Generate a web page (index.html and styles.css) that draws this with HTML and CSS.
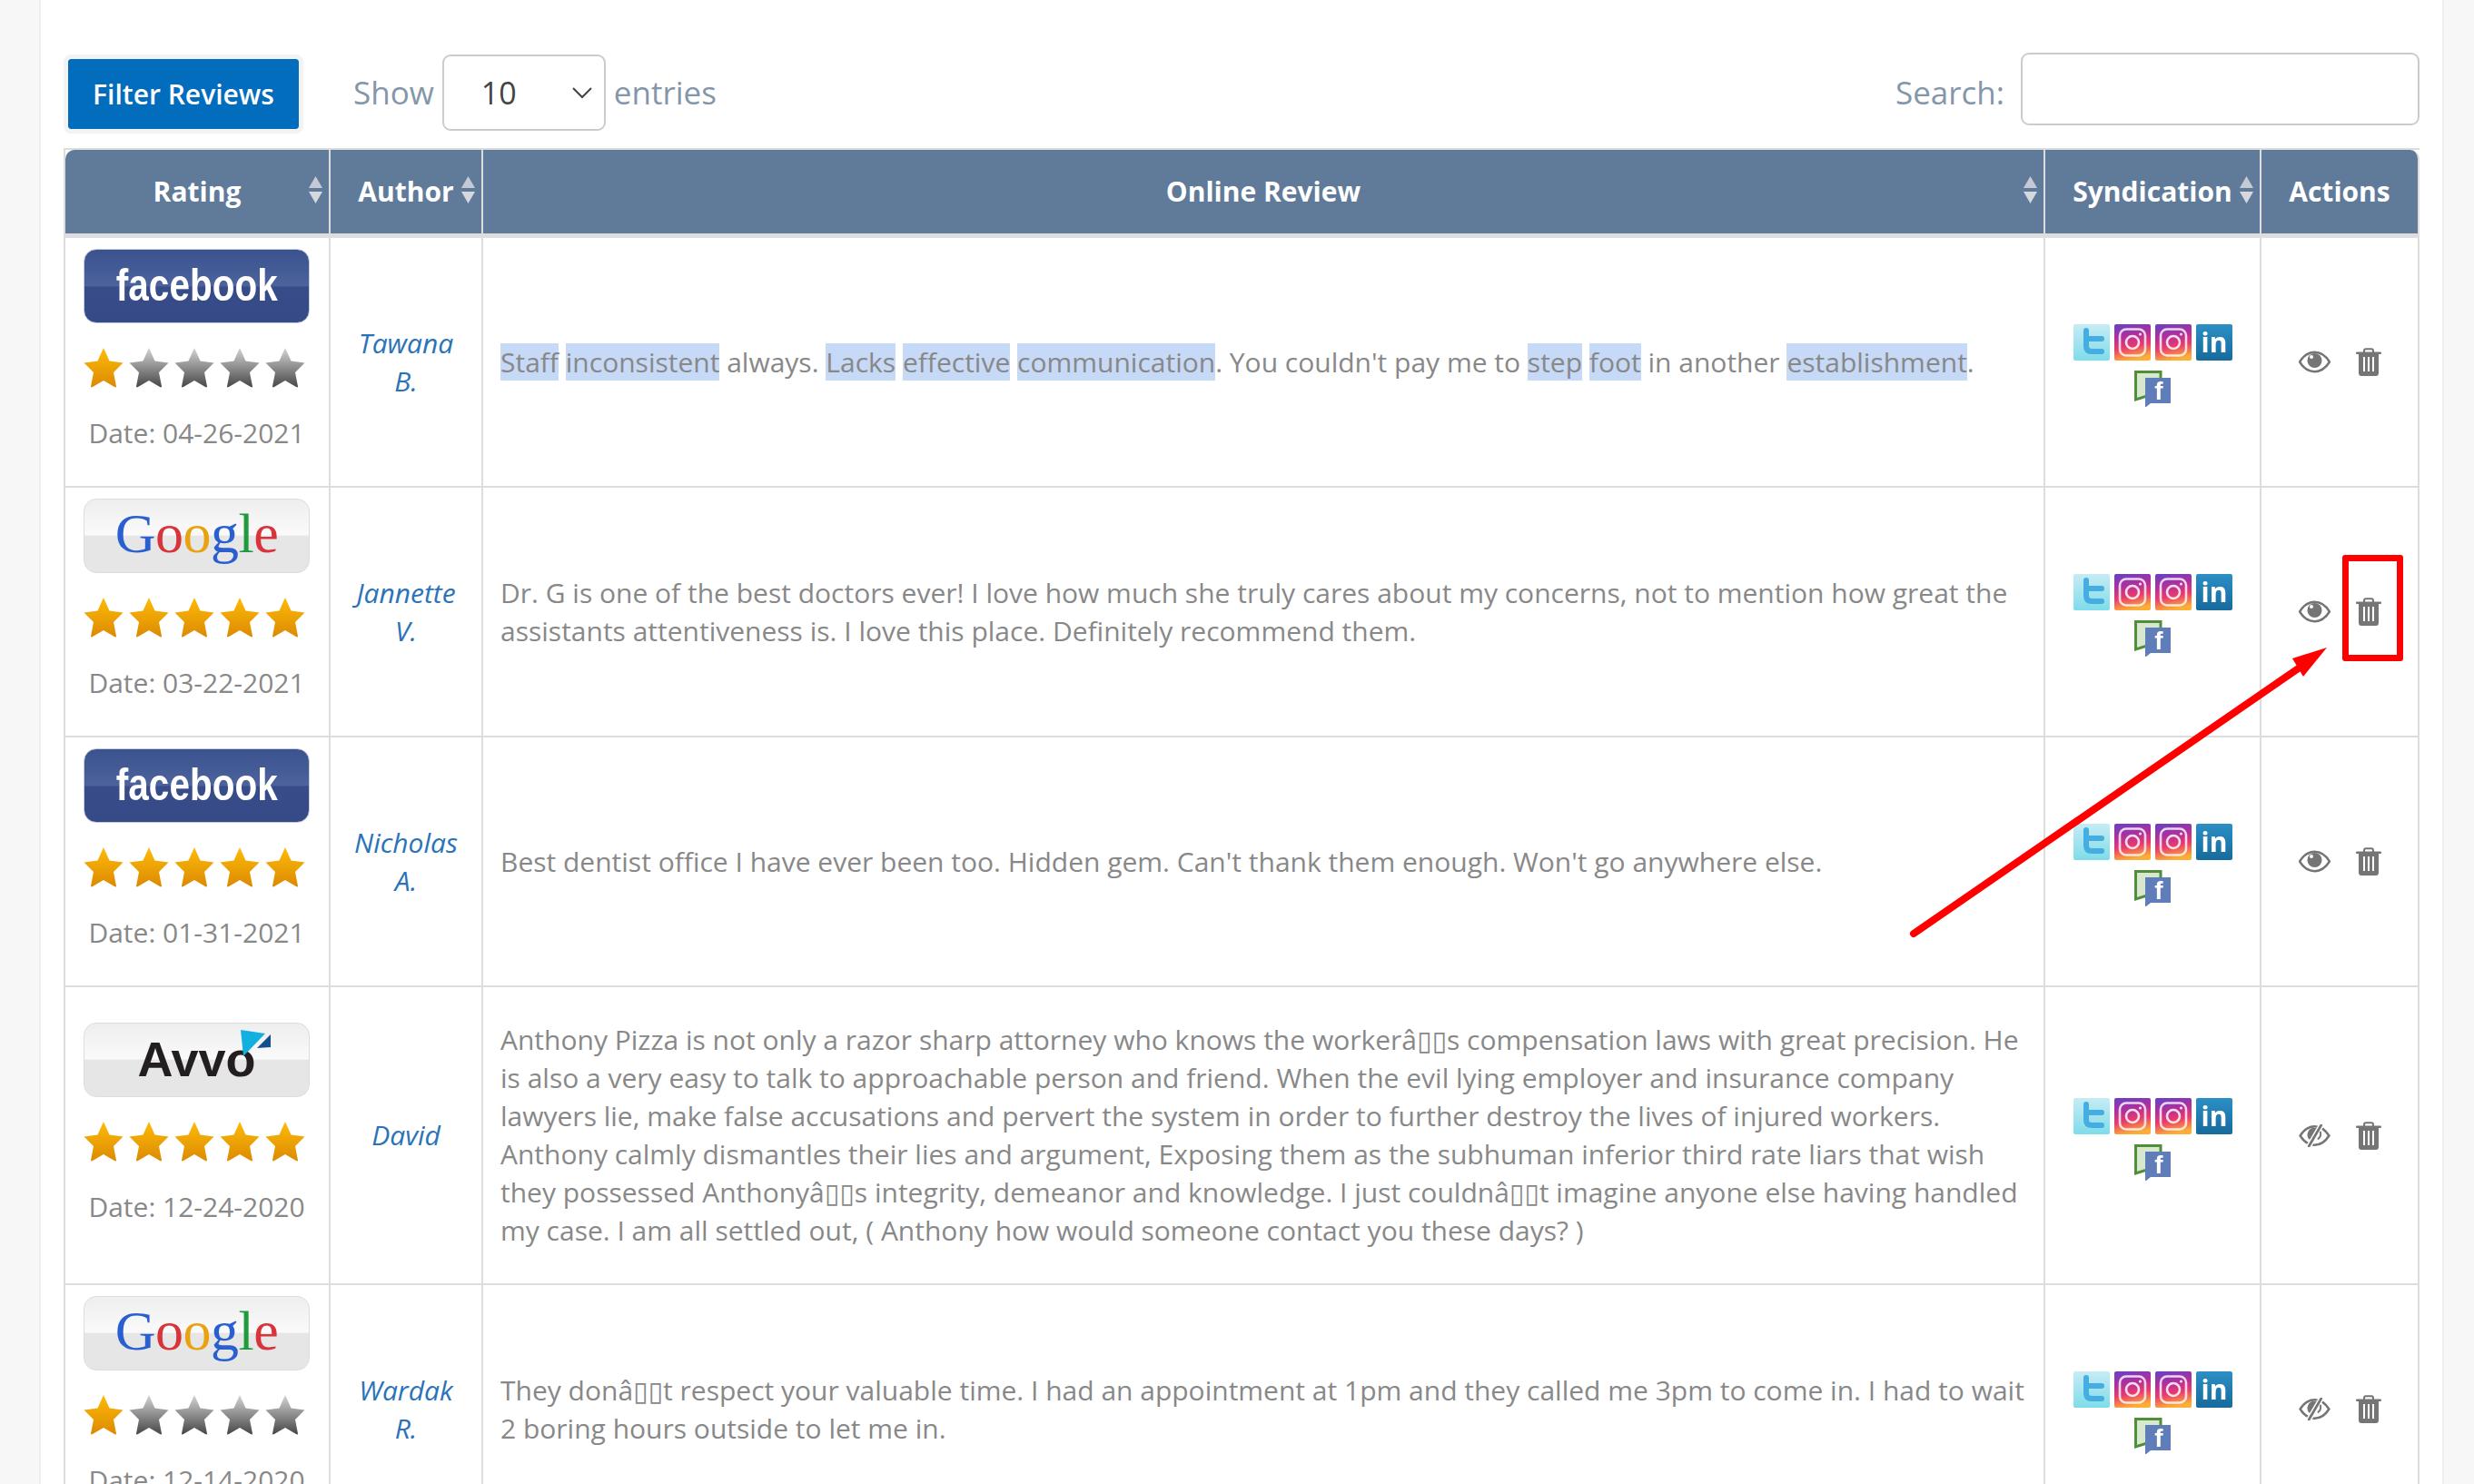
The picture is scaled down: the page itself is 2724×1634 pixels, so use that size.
FILE: index.html
```html
<!DOCTYPE html>
<html lang="en">

<head>
    <meta charset="utf-8">
    <meta name="viewport" content="width=device-width, initial-scale=1.0">
    <title>Online Reviews</title>
    <link rel="stylesheet" href="styles.css">
</head>

<body>

    <!-- shared icons -->
    <svg class="defs" width="0" height="0">
        <defs>
            <linearGradient id="gold" x1="0" y1="0" x2="0" y2="1">
                <stop offset="0" stop-color="#fdbb08" />
                <stop offset="1" stop-color="#dc8a02" />
            </linearGradient>
            <linearGradient id="grey" x1="0" y1="0" x2="0" y2="1">
                <stop offset="0" stop-color="#d4d4d4" />
                <stop offset="1" stop-color="#474747" />
            </linearGradient>
            <linearGradient id="tw" x1="0" y1="0" x2="0" y2="1">
                <stop offset="0" stop-color="#c6ecf5" />
                <stop offset="1" stop-color="#7edcea" />
            </linearGradient>
            <linearGradient id="ig" x1="0.15" y1="0" x2="0.35" y2="1">
                <stop offset="0" stop-color="#6a40c4" />
                <stop offset="0.35" stop-color="#b02f9c" />
                <stop offset="0.65" stop-color="#ea3a6e" />
                <stop offset="1" stop-color="#fdae35" />
            </linearGradient>
            <linearGradient id="li" x1="0" y1="0" x2="0" y2="1">
                <stop offset="0" stop-color="#2c8fc5" />
                <stop offset="1" stop-color="#176a9c" />
            </linearGradient>

            <symbol id="star" viewBox="0 0 44 45">
                <path d="M22 1 L28.5 15.5 L43.5 17.5 L33 28 L36 43.5 Q36 45 34 44 L22 37 L10 44 Q8 45 8 43.5 L11 28 L0.5 17.5 L15.5 15.5 Z" />
            </symbol>
            <symbol id="sort" viewBox="0 0 15 30">
                <polygon points="7.5,0 15,13 0,13" fill="#c5cbd5" />
                <polygon points="0,17 15,17 7.5,30" fill="#d6d8dd" />
            </symbol>
            <symbol id="twitter" viewBox="0 0 40 40">
                <rect width="40" height="40" rx="2" fill="url(#tw)" />
                <path d="M14 7 V24 Q14 30 20 30 H31 M14 16 H31" fill="none" stroke="#45addf" stroke-width="6" stroke-linecap="round" />
            </symbol>
            <symbol id="instagram" viewBox="0 0 40 40">
                <rect width="40" height="40" rx="2" fill="url(#ig)" />
                <rect x="6" y="5.5" width="28" height="29" rx="7" fill="none" stroke="#fff" stroke-opacity="0.8" stroke-width="2.6" />
                <circle cx="20" cy="20" r="7" fill="none" stroke="#fff" stroke-opacity="0.85" stroke-width="2.6" />
                <circle cx="28.5" cy="11" r="1.6" fill="#fff" fill-opacity="0.85" />
            </symbol>
            <symbol id="linkedin" viewBox="0 0 40 40">
                <rect width="40" height="40" rx="2" fill="url(#li)" />
                <text x="20" y="31" class="in-text">in</text>
            </symbol>
            <symbol id="fbchat" viewBox="0 0 40 40">
                <path d="M1.5 1.5 H29 V28 H14 L1.5 32 Z" fill="#d8e8cf" stroke="#4f8f3a" stroke-width="3" />
                <path d="M12 8 H40 V36 H18 L13 40 H12 Z" fill="#5f7db8" />
                <text x="27" y="32" class="f-text">f</text>
            </symbol>
            <symbol id="eye" viewBox="0 0 35 24">
                <path d="M1 12 C6 4 12 1.3 17.5 1.3 C23 1.3 29 4 34 12 C29 20 23 22.7 17.5 22.7 C12 22.7 6 20 1 12 Z" fill="#fff" stroke="#757575" stroke-width="2.6" />
                <circle cx="17.5" cy="10.5" r="8" fill="#757575" />
                <circle cx="14" cy="6.5" r="2" fill="#fff" />
            </symbol>
            <symbol id="eye-off" viewBox="0 0 35 26">
                <path d="M1 13 C6 5 12 2.3 17.5 2.3 C23 2.3 29 5 34 13 C29 21 23 23.7 17.5 23.7 C12 23.7 6 21 1 13 Z" fill="#fff" stroke="#757575" stroke-width="2.6" />
                <path d="M17.5 4 A8 8 0 0 0 12 18 L21 4.5 Z" fill="#757575" />
                <path d="M25 1 L11 25" stroke="#fff" stroke-width="6" />
                <path d="M25 1 L11 25" stroke="#757575" stroke-width="2.8" stroke-linecap="round" />
                <path d="M24 8 A8 8 0 0 1 21 17" fill="none" stroke="#757575" stroke-width="2" />
            </symbol>
            <symbol id="trash" viewBox="0 0 28 31">
                <path d="M9 5 V3.5 Q9 1.2 11 1.2 H17 Q19 1.2 19 3.5 V5" fill="none" stroke="#757575" stroke-width="2" />
                <rect x="0" y="4.5" width="28" height="2.6" rx="1" fill="#757575" />
                <path d="M3 7 H25 V27.5 Q25 31 22 31 H6 Q3 31 3 27.5 Z" fill="#757575" />
                <path d="M9 10 V26 M14 10 V26 M19 10 V26" stroke="#fff" stroke-width="2" />
            </symbol>
        </defs>
    </svg>

    <main class="panel">

        <div class="toolbar">
            <button class="btn-filter">Filter Reviews</button>
            <label class="show">Show
                <select class="entries">
                    <option>10</option>
                </select>
                entries</label>
            <label class="search">Search:
                <input type="text" class="search-box">
            </label>
        </div>

        <table class="reviews">
            <colgroup>
                <col class="c-rating">
                <col class="c-author">
                <col class="c-review">
                <col class="c-synd">
                <col class="c-actions">
            </colgroup>
            <thead>
                <tr>
                    <th>Rating<svg class="sort"><use href="#sort" /></svg></th>
                    <th>Author<svg class="sort"><use href="#sort" /></svg></th>
                    <th>Online Review<svg class="sort"><use href="#sort" /></svg></th>
                    <th>Syndication<svg class="sort"><use href="#sort" /></svg></th>
                    <th>Actions</th>
                </tr>
            </thead>
            <tbody>
                <tr>
                    <td class="rating">
                        <div class="badge fb"><span>facebook</span></div>
                        <div class="stars">
                            <svg class="on"><use href="#star" /></svg>
                            <svg class="off"><use href="#star" /></svg>
                            <svg class="off"><use href="#star" /></svg>
                            <svg class="off"><use href="#star" /></svg>
                            <svg class="off"><use href="#star" /></svg>
                        </div>
                        <p class="date">Date: 04-26-2021</p>
                    </td>
                    <td class="author">Tawana B.</td>
                    <td class="review"><mark>Staff</mark> <mark>inconsistent</mark> always. <mark>Lacks</mark> <mark>effective</mark> <mark>communication</mark>. You couldn't pay me to <mark>step</mark> <mark>foot</mark> in another <mark>establishment</mark>.</td>
                    <td>
                        <div class="synd">
                            <svg><use href="#twitter" /></svg>
                            <svg><use href="#instagram" /></svg>
                            <svg><use href="#instagram" /></svg>
                            <svg><use href="#linkedin" /></svg>
                            <svg><use href="#fbchat" /></svg>
                        </div>
                    </td>
                    <td>
                        <div class="actions">
                            <svg class="ic-eye"><use href="#eye" /></svg>
                            <svg class="ic-trash"><use href="#trash" /></svg>
                        </div>
                    </td>
                </tr>
                <tr>
                    <td class="rating">
                        <div class="badge gg"><span class="b">G</span><span class="r">o</span><span class="y">o</span><span class="b">g</span><span class="g">l</span><span class="r">e</span></div>
                        <div class="stars">
                            <svg class="on"><use href="#star" /></svg>
                            <svg class="on"><use href="#star" /></svg>
                            <svg class="on"><use href="#star" /></svg>
                            <svg class="on"><use href="#star" /></svg>
                            <svg class="on"><use href="#star" /></svg>
                        </div>
                        <p class="date">Date: 03-22-2021</p>
                    </td>
                    <td class="author">Jannette V.</td>
                    <td class="review">Dr. G is one of the best doctors ever! I love how much she truly cares about my concerns, not to mention how great the assistants attentiveness is. I love this place. Definitely recommend them.</td>
                    <td>
                        <div class="synd">
                            <svg><use href="#twitter" /></svg>
                            <svg><use href="#instagram" /></svg>
                            <svg><use href="#instagram" /></svg>
                            <svg><use href="#linkedin" /></svg>
                            <svg><use href="#fbchat" /></svg>
                        </div>
                    </td>
                    <td>
                        <div class="actions">
                            <svg class="ic-eye"><use href="#eye" /></svg>
                            <svg class="ic-trash"><use href="#trash" /></svg>
                        </div>
                    </td>
                </tr>
                <tr>
                    <td class="rating">
                        <div class="badge fb"><span>facebook</span></div>
                        <div class="stars">
                            <svg class="on"><use href="#star" /></svg>
                            <svg class="on"><use href="#star" /></svg>
                            <svg class="on"><use href="#star" /></svg>
                            <svg class="on"><use href="#star" /></svg>
                            <svg class="on"><use href="#star" /></svg>
                        </div>
                        <p class="date">Date: 01-31-2021</p>
                    </td>
                    <td class="author">Nicholas A.</td>
                    <td class="review">Best dentist office I have ever been too. Hidden gem. Can't thank them enough. Won't go anywhere else.</td>
                    <td>
                        <div class="synd">
                            <svg><use href="#twitter" /></svg>
                            <svg><use href="#instagram" /></svg>
                            <svg><use href="#instagram" /></svg>
                            <svg><use href="#linkedin" /></svg>
                            <svg><use href="#fbchat" /></svg>
                        </div>
                    </td>
                    <td>
                        <div class="actions">
                            <svg class="ic-eye"><use href="#eye" /></svg>
                            <svg class="ic-trash"><use href="#trash" /></svg>
                        </div>
                    </td>
                </tr>
                <tr>
                    <td class="rating">
                        <div class="badge av">
                            <span>Avvo</span>
                            <svg class="kite" viewBox="0 0 40 32">
                                <polygon points="0,0 27,4 3,29" fill="#12b0de" />
                                <polygon points="33,5 33,19 18,20" fill="#11508e" />
                            </svg>
                        </div>
                        <div class="stars">
                            <svg class="on"><use href="#star" /></svg>
                            <svg class="on"><use href="#star" /></svg>
                            <svg class="on"><use href="#star" /></svg>
                            <svg class="on"><use href="#star" /></svg>
                            <svg class="on"><use href="#star" /></svg>
                        </div>
                        <p class="date">Date: 12-24-2020</p>
                    </td>
                    <td class="author">David</td>
                    <td class="review">Anthony Pizza is not only a razor sharp attorney who knows the workerâ<span class="tofu">▯▯</span>s compensation laws with great precision. He is also a very easy to talk to approachable person and friend. When the evil lying employer and insurance company lawyers lie, make false accusations and pervert the system in order to further destroy the lives of injured workers. Anthony calmly dismantles their lies and argument, Exposing them as the subhuman inferior third rate liars that wish they possessed Anthonyâ<span class="tofu">▯▯</span>s integrity, demeanor and knowledge. I just couldnâ<span class="tofu">▯▯</span>t imagine anyone else having handled my case. I am all settled out, ( Anthony how would someone contact you these days? )</td>
                    <td>
                        <div class="synd">
                            <svg><use href="#twitter" /></svg>
                            <svg><use href="#instagram" /></svg>
                            <svg><use href="#instagram" /></svg>
                            <svg><use href="#linkedin" /></svg>
                            <svg><use href="#fbchat" /></svg>
                        </div>
                    </td>
                    <td>
                        <div class="actions">
                            <svg class="ic-eye"><use href="#eye-off" /></svg>
                            <svg class="ic-trash"><use href="#trash" /></svg>
                        </div>
                    </td>
                </tr>
                <tr>
                    <td class="rating">
                        <div class="badge gg"><span class="b">G</span><span class="r">o</span><span class="y">o</span><span class="b">g</span><span class="g">l</span><span class="r">e</span></div>
                        <div class="stars">
                            <svg class="on"><use href="#star" /></svg>
                            <svg class="off"><use href="#star" /></svg>
                            <svg class="off"><use href="#star" /></svg>
                            <svg class="off"><use href="#star" /></svg>
                            <svg class="off"><use href="#star" /></svg>
                        </div>
                        <p class="date">Date: 12-14-2020</p>
                    </td>
                    <td class="author">Wardak R.</td>
                    <td class="review">They donâ<span class="tofu">▯▯</span>t respect your valuable time. I had an appointment at 1pm and they called me 3pm to come in. I had to wait 2 boring hours outside to let me in.</td>
                    <td>
                        <div class="synd">
                            <svg><use href="#twitter" /></svg>
                            <svg><use href="#instagram" /></svg>
                            <svg><use href="#instagram" /></svg>
                            <svg><use href="#linkedin" /></svg>
                            <svg><use href="#fbchat" /></svg>
                        </div>
                    </td>
                    <td>
                        <div class="actions">
                            <svg class="ic-eye"><use href="#eye-off" /></svg>
                            <svg class="ic-trash"><use href="#trash" /></svg>
                        </div>
                    </td>
                </tr>
            </tbody>
        </table>
    </main>

    <!-- red annotation drawn on the screenshot -->
    <div class="mark-box"></div>
    <svg class="mark-arrow" viewBox="0 0 470 330">
        <path d="M7 323 L432 30" stroke="#f00" stroke-width="8" stroke-linecap="round" />
        <polygon points="462,8 424,20 436,40" fill="#f00" />
    </svg>

</body></html>
```

FILE: styles.css
```css
html {
    overflow: hidden;
}

body {
    margin: 0;
    height: 1634px;
    overflow: hidden;
    position: relative;
    background-color: #f7f7f7;
    font-family: "Open Sans", "Liberation Sans", sans-serif;
    font-size: 30px;
    line-height: 42px;
    color: #888;
}

.defs {
    position: absolute;
}

.panel {
    margin-left: 43px;
    width: 2648px;
    box-sizing: border-box;
    height: 1634px;
    padding: 58px 25px 0 25px;
    background-color: #fff;
    border-left: 2px solid #eee;
    border-right: 2px solid #eee;
}

/* top bar */
.toolbar {
    display: flex;
    align-items: flex-start;
    height: 105px;
    color: #8496a9;
    font-size: 35px;
}

.btn-filter {
    width: 264px;
    height: 87px;
    margin-top: 2px;
    box-sizing: border-box;
    border: 5px solid #f3f3f3;
    border-radius: 8px;
    background-color: #026cbd;
    background-clip: padding-box;
    color: #fff;
    font-family: inherit;
    font-size: 30px;
    font-weight: 600;
}

.show {
    display: flex;
    align-items: center;
    height: 84px;
    margin-top: 2px;
    margin-left: 55px;
    gap: 9px;
}

.entries {
    appearance: none;
    width: 180px;
    height: 84px;
    padding-left: 41px;
    border: 2px solid #ccc;
    border-radius: 9px;
    color: #444;
    font-family: inherit;
    font-size: 34px;
    background: #fff url("data:image/svg+xml,%3Csvg xmlns='http://www.w3.org/2000/svg' width='22' height='14'%3E%3Cpath d='M1 2 L11 12 L21 2' fill='none' stroke='%23444' stroke-width='2'/%3E%3C/svg%3E") no-repeat right 13px center;
}

.search {
    display: flex;
    align-items: flex-start;
    line-height: 88px;
    margin-left: auto;
    gap: 18px;
}

.search-box {
    width: 439px;
    height: 80px;
    box-sizing: border-box;
    border: 2px solid #ccc;
    border-radius: 9px;
}

/* table */
.reviews {
    width: 2594px;
    table-layout: fixed;
    border-collapse: separate;
    border-spacing: 0;
    border-top: 2px solid #ddd;
    border-left: 2px solid #ddd;
}

.c-rating {
    width: 292px;
}

.c-author {
    width: 168px;
}

.c-review {
    width: 1720px;
}

.c-synd {
    width: 238px;
}

.c-actions {
    width: 174px;
}

th {
    position: relative;
    height: 92px;
    padding: 0;
    background-color: #607a9a;
    color: #fff;
    font-size: 30px;
    font-weight: 700;
    border-right: 2px solid #ddd;
    border-bottom: 5px solid #ddd;
}

th:first-child {
    border-top-left-radius: 10px;
}

th:last-child {
    border-top-right-radius: 10px;
}

.sort {
    position: absolute;
    top: 29px;
    right: 7px;
    width: 15px;
    height: 30px;
    filter: blur(0.7px);
}

td {
    padding: 0;
    text-align: center;
    vertical-align: middle;
    border-right: 2px solid #ddd;
    border-bottom: 2px solid #ddd;
}

td.rating {
    padding: 12px 21px 37px 20px;
}

td.author {
    padding: 0 20px;
    color: #2a73b8;
    font-style: italic;
}

td.review {
    padding: 37px 18px 37px 19px;
    text-align: left;
}

mark {
    background-color: #c6d9f6;
    color: inherit;
}

.tofu {
    font-family: "DejaVu Sans", sans-serif;
    font-size: 30px;
    line-height: 0;
}

/* site logos */
.badge {
    position: relative;
    height: 82px;
    box-sizing: border-box;
    border: 1px solid #ddd;
    border-radius: 14px;
    overflow: hidden;
    white-space: nowrap;
    background: linear-gradient(#eee 0, #fafafa 49%, #e6e6e6 50%, #e6e6e6 100%);
}

.fb {
    border-color: #c8cddb;
    background: linear-gradient(#3a528e 0, #4c639c 50%, #384c8a 51%, #364a88 100%);
    color: #fff;
    font-family: "Liberation Sans", sans-serif;
    font-size: 50px;
    font-weight: 700;
    line-height: 78px;
}

.fb span {
    display: inline-block;
    transform: scaleX(0.81);
}

.gg {
    font-family: "Liberation Serif", serif;
    font-size: 62px;
    line-height: 74px;
    letter-spacing: -0.5px;
}

.gg .b {
    color: #2a5fcf;
}

.gg .r {
    color: #d8343a;
}

.gg .y {
    color: #e9a312;
}

.gg .g {
    color: #1f9a3c;
}

.av {
    color: #231f20;
    font-family: "Liberation Sans", sans-serif;
    font-size: 54px;
    font-weight: 700;
    line-height: 78px;
}

.kite {
    position: absolute;
    top: 7px;
    left: 172px;
    width: 40px;
    height: 32px;
}

.stars {
    display: flex;
    justify-content: space-between;
    width: 244px;
    height: 45px;
    margin-top: 26px;
}

.stars svg {
    width: 44px;
    height: 45px;
    filter: blur(0.6px);
}

.on {
    fill: url(#gold);
}

.off {
    fill: url(#grey);
}

.date {
    margin: 29px 0 0 0;
    white-space: nowrap;
}

/* syndication icons */
.synd {
    display: flex;
    flex-wrap: wrap;
    justify-content: center;
    gap: 11px 5px;
    width: 175px;
    margin: 8px auto 0 auto;
}

.synd svg {
    width: 40px;
    height: 40px;
    filter: blur(0.6px);
}

.in-text {
    fill: #fff;
    font-family: "Open Sans", sans-serif;
    font-size: 30px;
    font-weight: 700;
    text-anchor: middle;
}

.f-text {
    fill: #fff;
    font-family: "Liberation Sans", sans-serif;
    font-size: 28px;
    font-weight: 700;
    text-anchor: middle;
}

.actions {
    display: flex;
    justify-content: center;
    align-items: center;
    gap: 28px;
}

.ic-eye {
    width: 35px;
    height: 25px;
}

.ic-trash {
    width: 28px;
    height: 31px;
}

/* annotation */
.mark-box {
    position: absolute;
    left: 2579px;
    top: 611px;
    width: 67px;
    height: 117px;
    box-sizing: border-box;
    border: 7px solid #f00;
    border-radius: 3px;
}

.mark-arrow {
    position: absolute;
    left: 2100px;
    top: 705px;
    width: 470px;
    height: 330px;
}
```
